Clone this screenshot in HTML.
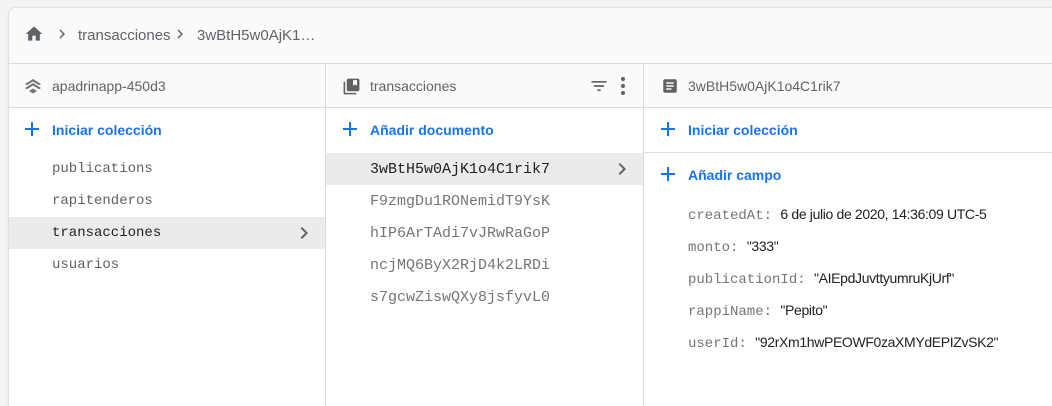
<!DOCTYPE html>
<html><head><meta charset="utf-8"><style>
*{box-sizing:border-box;margin:0;padding:0}
html,body{width:1052px;height:406px;overflow:hidden}
body{background:#f1f3f4;font-family:"Liberation Sans",Arial,sans-serif;position:relative}
.card{position:absolute;left:8px;top:7px;width:1060px;height:410px;background:#fff;border-radius:8px;border:1px solid #e0e0e0;overflow:hidden;box-shadow:0 1px 2px rgba(0,0,0,.08)}
.bc{position:absolute;left:0;top:0;right:0;height:56px;background:#fafafa;border-bottom:1px solid #dadada}
.hdr{position:absolute;top:56px;left:0;right:0;height:44px;background:#fafafa;border-bottom:1px solid #dadada}
.vl{position:absolute;top:56px;bottom:0;width:1px;background:#dadada}
.t{position:absolute;font-size:14px;color:#5f6368;white-space:nowrap}
.blue{color:#1a73e8;font-weight:bold;font-size:14px}
.mono{font-family:"Liberation Mono","DejaVu Sans Mono",monospace;font-size:14px;color:#616161}
.sel{position:absolute;height:32px;background:#ebebeb}
.k{font-family:"Liberation Mono","DejaVu Sans Mono",monospace;color:#757575;font-size:14px}
.v{color:#202124;font-size:14px;letter-spacing:-0.35px}
svg{position:absolute}
</style></head><body>
<div class="card">
<div class="bc"></div>
<div class="hdr"></div>
<div class="vl" style="left:316px"></div>
<div class="vl" style="left:634px"></div>
<div class="sel" style="left:0;width:316px;top:209px"></div>
<div class="sel" style="left:317px;width:317px;top:145px"></div>
</div>
<!-- breadcrumb -->
<svg style="left:23px;top:24px" width="22" height="20" viewBox="0 0 24 24"><path d="M10 20v-6h4v6h5v-8h3L12 3 2 12h3v8z" fill="#5f6368"/></svg>
<svg style="left:53px;top:25px" width="18" height="18" viewBox="0 0 24 24"><path d="M8.6 16.6L13.2 12 8.6 7.4 10 6l6 6-6 6z" fill="#5f6368"/></svg>
<div class="t" style="left:78px;top:27px;font-size:15px">transacciones</div>
<svg style="left:171px;top:25px" width="18" height="18" viewBox="0 0 24 24"><path d="M8.6 16.6L13.2 12 8.6 7.4 10 6l6 6-6 6z" fill="#5f6368"/></svg>
<div class="t" style="left:197px;top:27px;font-size:15px">3wBtH5w0AjK1…</div>
<!-- headers -->
<svg style="left:24px;top:77px" width="18" height="18" viewBox="0 0 18 18"><path d="M1 7l8-5 8 5-2 1.3L9 4.5 3 8.3z M1 11l8-5 8 5-2 1.3L9 8.5 3 12.3z M5 14l4-2.5 4 2.5-4 2.5z" fill="#757575"/></svg>
<div class="t" style="left:52px;top:78px">apadrinapp-450d3</div>
<svg style="left:342px;top:77px" width="19" height="19" viewBox="0 0 24 24"><path d="M4 6H2v14c0 1.1.9 2 2 2h14v-2H4V6zm16-4H8c-1.1 0-2 .9-2 2v12c0 1.1.9 2 2 2h12c1.1 0 2-.9 2-2V4c0-1.1-.9-2-2-2zm-1 9l-2.5-1.5L14 11V4h5v7z" fill="#616161"/></svg>
<div class="t" style="left:370px;top:78px">transacciones</div>
<svg style="left:588px;top:76px" width="22" height="20" viewBox="0 0 24 24"><path d="M3 6h18v2H3zM6 11h12v2H6zM10 16h4v2h-4z" fill="#616161"/></svg>
<svg style="left:616px;top:76px" width="14" height="20" viewBox="0 0 14 20"><circle cx="7" cy="3" r="2" fill="#616161"/><circle cx="7" cy="10" r="2" fill="#616161"/><circle cx="7" cy="17" r="2" fill="#616161"/></svg>
<svg style="left:661px;top:77px" width="18" height="18" viewBox="0 0 24 24"><path d="M19 3H5c-1.1 0-2 .9-2 2v14c0 1.1.9 2 2 2h14c1.1 0 2-.9 2-2V5c0-1.1-.9-2-2-2zm-5 14H7v-2h7v2zm3-4H7v-2h10v2zm0-4H7V7h10v2z" fill="#616161"/></svg>
<div class="t" style="left:688px;top:78px">3wBtH5w0AjK1o4C1rik7</div>
<!-- plus items -->
<svg style="left:24px;top:121px" width="16" height="16" viewBox="0 0 16 16"><path d="M7 1h2v6h6v2H9v6H7V9H1V7h6z" fill="#1a73e8"/></svg>
<div class="t blue" style="left:52px;top:122px">Iniciar colección</div>
<svg style="left:342px;top:121px" width="16" height="16" viewBox="0 0 16 16"><path d="M7 1h2v6h6v2H9v6H7V9H1V7h6z" fill="#1a73e8"/></svg>
<div class="t blue" style="left:370px;top:122px">Añadir documento</div>
<svg style="left:660px;top:121px" width="16" height="16" viewBox="0 0 16 16"><path d="M7 1h2v6h6v2H9v6H7V9H1V7h6z" fill="#1a73e8"/></svg>
<div class="t blue" style="left:688px;top:122px">Iniciar colección</div>
<div style="position:absolute;left:644px;top:152px;width:408px;height:1px;background:#e0e0e0"></div>
<svg style="left:660px;top:166px" width="16" height="16" viewBox="0 0 16 16"><path d="M7 1h2v6h6v2H9v6H7V9H1V7h6z" fill="#1a73e8"/></svg>
<div class="t blue" style="left:688px;top:167px">Añadir campo</div>
<!-- left list -->
<div class="t mono" style="left:52px;top:161px">publications</div>
<div class="t mono" style="left:52px;top:193px">rapitenderos</div>
<div class="t mono" style="left:52px;top:225px;color:#202124">transacciones</div>
<svg style="left:292px;top:221px" width="24" height="24" viewBox="0 0 24 24"><path d="M8.6 16.6L13.2 12 8.6 7.4 10 6l6 6-6 6z" fill="#5f6368"/></svg>
<div class="t mono" style="left:52px;top:257px">usuarios</div>
<!-- middle list -->
<div class="t mono" style="left:370px;top:161px;color:#202124;font-size:15px">3wBtH5w0AjK1o4C1rik7</div>
<svg style="left:610px;top:157px" width="24" height="24" viewBox="0 0 24 24"><path d="M8.6 16.6L13.2 12 8.6 7.4 10 6l6 6-6 6z" fill="#5f6368"/></svg>
<div class="t mono" style="left:370px;top:193px;font-size:15px;color:#757575">F9zmgDu1RONemidT9YsK</div>
<div class="t mono" style="left:370px;top:225px;font-size:15px;color:#757575">hIP6ArTAdi7vJRwRaGoP</div>
<div class="t mono" style="left:370px;top:257px;font-size:15px;color:#757575">ncjMQ6ByX2RjD4k2LRDi</div>
<div class="t mono" style="left:370px;top:289px;font-size:15px;color:#757575">s7gcwZiswQXy8jsfyvL0</div>
<!-- fields -->
<div class="t" style="left:688px;top:206px"><span class="k">createdAt: </span><span class="v">6 de julio de 2020, 14:36:09 UTC-5</span></div>
<div class="t" style="left:688px;top:238px"><span class="k">monto: </span><span class="v">"333"</span></div>
<div class="t" style="left:688px;top:270px"><span class="k">publicationId: </span><span class="v">"AIEpdJuvttyumruKjUrf"</span></div>
<div class="t" style="left:688px;top:302px"><span class="k">rappiName: </span><span class="v">"Pepito"</span></div>
<div class="t" style="left:688px;top:334px"><span class="k">userId: </span><span class="v">"92rXm1hwPEOWF0zaXMYdEPIZvSK2"</span></div>
</body></html>
